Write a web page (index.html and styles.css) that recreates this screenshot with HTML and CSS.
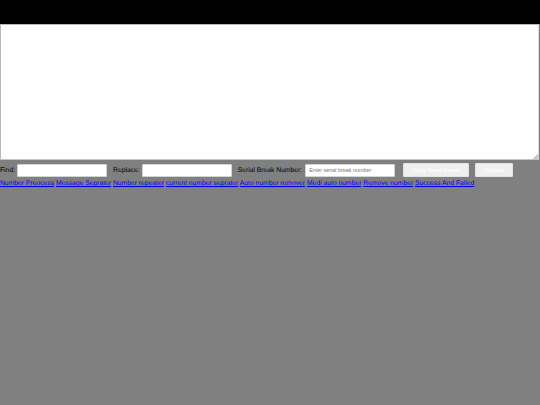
FILE: index.html
```html
<!DOCTYPE html>
<html lang="en">
<head>
  <meta charset="UTF-8" />
  <title>Number Process</title>
  <link rel="stylesheet" href="styles.css">
</head>
<body>

<div class="topbar"></div>

<div class="editor-wrap">
  <textarea class="editor"></textarea>
</div>

<div class="controls">
  <label for="find">Find:</label>
  <input type="text" id="find" class="field">
  <label for="replace" class="gap">Replace:</label>
  <input type="text" id="replace" class="field">
  <label for="serial" class="gap">Serial Break Number:</label>
  <input type="text" id="serial" class="field field-serial" placeholder="Enter serial break number">
  <button class="btn btn-apply" disabled>Apply Serial Breaks</button>
  <button class="btn btn-replace" disabled>Replace</button>
</div>

<nav class="links">
  <a href="#">Number Preocess</a>
  <a href="#">Message Seprater</a>
  <a href="#">Number repeater</a>
  <a href="#">current number seprater</a>
  <a href="#">Auto number remover</a>
  <a href="#">Medi auto number</a>
  <a href="#">Remove number</a>
  <a href="#">Success And Failed</a>
</nav>

</body>
</html>
```

FILE: styles.css
```css
html, body {
  height: 100%;
}

body {
  margin: 0;
  background-color: #808080;
  font-family: 'Liberation Sans', Arial, sans-serif;
  font-size: 6.75px;
  color: #000;
  overflow: hidden;
  text-rendering: geometricPrecision;
}

.topbar {
  height: 24px;
  background: #000;
}

.editor-wrap {
  position: relative;
  width: 539px;
  height: 136px;
}

/* faint resize grip in the corner */
.editor-wrap::after {
  content: "";
  position: absolute;
  right: 1px;
  bottom: 1px;
  width: 5px;
  height: 5px;
  background: linear-gradient(135deg, transparent 50%, #c8c8c8 50%);
}

.editor {
  display: block;
  box-sizing: border-box;
  width: 100%;
  height: 100%;
  margin: 0;
  padding: 1px;
  background: #fff;
  border: 1px solid #b8b8b8;
  border-right-color: #dcdcdc;
  border-bottom-color: #c4c4c4;
  resize: none;
}

.controls {
  display: flex;
  align-items: center;
  height: 14px;
  margin-top: 3px;
}

.field {
  box-sizing: border-box;
  width: 90px;
  height: 13px;
  margin: 0 0 0 2px;
  padding: 0 3px;
  background: #fff;
  border: 1px solid #d4d4d4;
  border-radius: 1px;
  font-family: inherit;
  font-size: 5.4px;
}

.field-serial {
  margin-left: 3px;
}

.field::placeholder {
  color: #757575;
}

.gap {
  margin-left: 6px;
}

.btn {
  box-sizing: border-box;
  height: 14px;
  padding: 0;
  background: #efefef;
  border: 1px solid #e4e4e4;
  border-radius: 1px;
  color: #fff;
  font-family: inherit;
  font-size: 5.4px;
}

.btn-apply {
  width: 66px;
  margin-left: 8px;
}

.btn-replace {
  width: 38px;
  margin-left: 6px;
}

.links {
  margin-top: 2px;
  line-height: 9px;
}

.links a {
  color: #0000ee;
}
```
